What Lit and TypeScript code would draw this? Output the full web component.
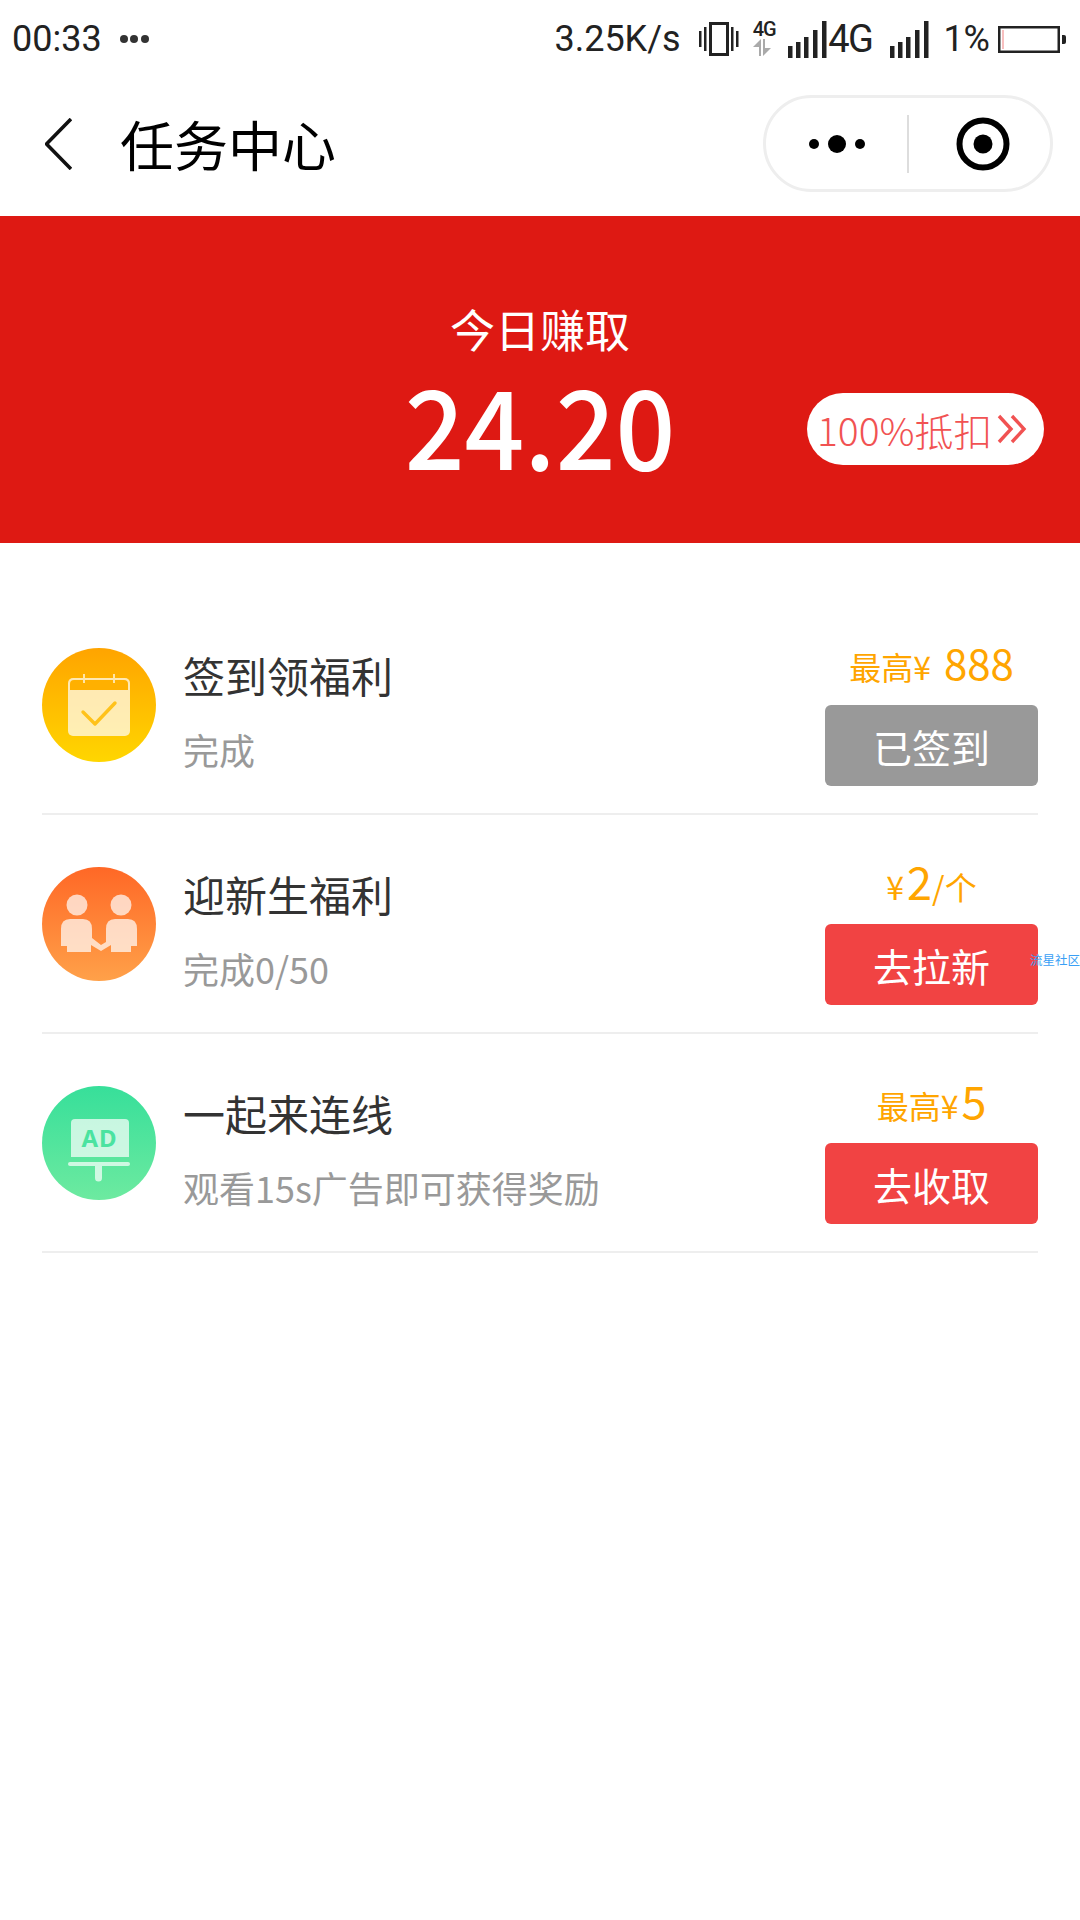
import { LitElement, html, css, svg } from "lit";
import { customElement } from "lit/decorators.js";

const signal = svg`<svg class="signal" width="39" height="37" viewBox="0 0 39 37" fill="#222">
  <rect x="0" y="25" width="4.5" height="12"/><rect x="8" y="21" width="4.5" height="16"/><rect x="16" y="16" width="4.5" height="21"/><rect x="25" y="9" width="4.5" height="28"/><rect x="34" y="0" width="4.5" height="37"/></svg>`;

const calendarIcon = svg`<svg class="icon" viewBox="0 0 114 114">
  <defs><linearGradient id="g1" x1="0" y1="0" x2="0" y2="1"><stop offset="0" stop-color="#ffa400"/><stop offset="1" stop-color="#ffd600"/></linearGradient></defs>
  <circle cx="57" cy="57" r="57" fill="url(#g1)"/>
  <path d="M31 30h52a5 5 0 0 1 5 5v48a5 5 0 0 1-5 5H31a5 5 0 0 1-5-5V35a5 5 0 0 1 5-5z" fill="#fff" fill-opacity=".7"/>
  <path d="M28 42V36a4 4 0 0 1 4-4h50a4 4 0 0 1 4 4v6z" fill="#ffb000"/>
  <path d="M42 26v9M72 26v9" stroke="#ffe5a8" stroke-width="2" fill="none"/>
  <path d="M41 64l12 12 20-21" stroke="#ffc21a" stroke-width="3.4" fill="none" stroke-linecap="round" stroke-linejoin="round"/></svg>`;

const peopleIcon = svg`<svg class="icon" viewBox="0 0 114 114">
  <defs><linearGradient id="g2" x1="0" y1="0" x2="0" y2="1"><stop offset="0" stop-color="#ff6826"/><stop offset="1" stop-color="#ffa149"/></linearGradient></defs>
  <circle cx="57" cy="57" r="57" fill="url(#g2)"/>
  <g fill="#fff" fill-opacity=".7">
    <circle cx="35" cy="38" r="10.5"/><circle cx="79" cy="38" r="10.5"/>
    <path d="M28 52h13q9 0 9 10v9l9 7 5-3v-13q0-10 9-10h13q9 0 9 10v17h-6v6H69V78l-10 6-10-6v7H25v-6h-6V62q0-10 9-10z"/>
  </g></svg>`;

const adIcon = svg`<svg class="icon" viewBox="0 0 114 114">
  <defs><linearGradient id="g3" x1="0" y1="0" x2="0" y2="1"><stop offset="0" stop-color="#37df9a"/><stop offset="1" stop-color="#6deaa0"/></linearGradient></defs>
  <circle cx="57" cy="57" r="57" fill="url(#g3)"/>
  <g fill="#fff" fill-opacity=".7">
    <path d="M33 33h50a4 4 0 0 1 4 4v34H29V37a4 4 0 0 1 4-4z"/>
    <rect x="26" y="76" width="62" height="4" rx="2"/>
    <path d="M53 80h7v12a3.500 3.500 0 0 1-7 0z"/>
  </g>
  <text x="57.500" y="61" text-anchor="middle" font-family="'Noto Sans','Noto Sans CJK SC',sans-serif" font-weight="700" font-size="24" letter-spacing="1" fill="#4be3a0">AD</text></svg>`;

interface Task { icon: unknown; title: string; sub: string; price: unknown; btn: string; done?: boolean; mark?: boolean }

const tasks: Task[] = [
  { icon: calendarIcon, title: "签到领福利", sub: "完成", btn: "已签到", done: true,
    price: html`<span class="s">最高¥</span><span class="n big">888</span>` },
  { icon: peopleIcon, title: "迎新生福利", sub: "完成0/50", btn: "去拉新", mark: true,
    price: html`<span class="s">¥</span><span class="n">2</span><span class="s">/个</span>` },
  { icon: adIcon, title: "一起来连线", sub: "观看15s广告即可获得奖励", btn: "去收取",
    price: html`<span class="s">最高¥</span><span class="n">5</span>` },
];

@customElement("app-root")
export class AppRoot extends LitElement {
  static styles = css`
    :host { display: block; min-height: 1920px; background: #fff; font-family: "Noto Sans CJK SC", "Noto Sans", sans-serif; }
    .status { height: 78px; display: flex; align-items: center; padding: 0 13px 0 12px; font-family: Roboto, sans-serif; font-size: 36px; color: #222; box-sizing: border-box; }
    .status span { line-height: 1.2; }
    .time, .speed, .lte, .pct { position: relative; top: 1px; }
    .dots { margin-left: 18px; display: flex; gap: 2.500px; }
    .dots i { width: 8px; height: 8px; border-radius: 50%; background: #333; display: block; }
    .right { margin-left: auto; display: flex; align-items: center; height: 78px; }
    .speed { margin-right: 18px; }
    .vib { margin-right: 14px; }
    .small4g { margin-right: 9px; width: 26px; height: 40px; display: flex; flex-direction: column; align-items: flex-start; }
    .status .small4g span { font-size: 20px; font-weight: 500; letter-spacing: -1px; line-height: 20px; white-space: nowrap; }
    .small4g svg { display: block; }
    .lte { font-size: 38px; letter-spacing: -1.500px; margin: 0 17.500px 0 1.500px; }
    .pct { margin: 0 8px 0 14.500px; }
    .nav { height: 138px; display: flex; align-items: center; padding: 0 27px 7px 45px; box-sizing: border-box; }
    .back { margin-right: 48px; }
    .nav h1 { margin: 0; font-size: 54px; font-weight: 400; color: #000; line-height: 1; flex: 1; }
    .capsule { width: 290px; height: 97px; box-sizing: border-box; border: 3px solid #eee; border-radius: 49px; display: flex; align-items: center; }
    .cap-l { width: 141px; display: flex; justify-content: center; align-items: center; gap: 9px; box-sizing: border-box; }
    .cap-l i { display: block; border-radius: 50%; background: #000; width: 10px; height: 10px; }
    .cap-l i.m { width: 18px; height: 18px; }
    .sep { width: 2px; height: 58px; background: #ddd; }
    .cap-r { flex: 1; display: flex; justify-content: center; padding-left: 6px; }
    .hero { height: 327px; background: #de1913; color: #fff; position: relative; display: flex; flex-direction: column; align-items: center; box-sizing: border-box; padding-top: 83px; }
    .hero .lbl { font-size: 45px; line-height: 60px; }
    .hero .val { font-size: 105px; line-height: 100px; font-weight: 500; margin-top: 13px; transform: scaleY(1.04); }
    .pill { position: absolute; left: 807px; top: 177px; width: 237px; height: 72px; border-radius: 36px; background: #fff; color: #f15252; display: flex; align-items: center; padding-left: 10px; box-sizing: border-box; font-size: 39px; font-weight: 300; }
    .pill svg { margin-left: 4px; }
    .list { margin-top: 53px; }
    .row { position: relative; margin: 0 42px; height: 219px; box-sizing: border-box; border-bottom: 2px solid #eee; display: flex; }
    .icon { width: 114px; height: 114px; margin-top: 52px; flex: none; display: block; }
    .txt { flex: 1; margin-left: 27px; margin-top: 49px; }
    .t { font-size: 42px; line-height: 60px; color: #333; }
    .d { font-size: 36px; line-height: 50px; margin-top: 19px; color: #999; }
    .act { width: 213px; display: flex; flex-direction: column; align-items: center; }
    .price { height: 60px; margin-top: 36px; margin-bottom: 13px; display: flex; align-items: baseline; justify-content: center; color: #ffa500; line-height: 60px; white-space: nowrap; }
    .s { font-size: 32px; }
    .n { font-size: 45px; margin-left: 3px; }
    .n.big { font-size: 42px; margin-left: 13px; }
    .btn { width: 213px; height: 81px; border-radius: 6px; background: #f14343; color: #fff; font-size: 39px; display: flex; align-items: center; justify-content: center; }
    .btn.done { background: #999; }
    .mark { position: absolute; right: -42px; top: 137px; width: 50px; font-size: 12.500px; line-height: 16px; color: #3a9ff5; white-space: nowrap; }
  `;

  render() {
    return html`
      <div class="status">
        <span class="time">00:33</span>
        <span class="dots"><i></i><i></i><i></i></span>
        <div class="right">
          <span class="speed">3.25K/s</span>
          <svg class="vib" width="40" height="34" viewBox="0 0 40 34" fill="#222">
            <rect x="0" y="9" width="2.500" height="16"/><rect x="5" y="5" width="2.500" height="24"/>
            <rect x="11.500" y="1.500" width="17" height="31" fill="none" stroke="#222" stroke-width="3"/>
            <rect x="32" y="5" width="2.500" height="24"/><rect x="37" y="9" width="2.500" height="16"/>
          </svg>
          <div class="small4g">
            <span>4G</span>
            <svg width="18" height="18" viewBox="0 0 18 18"><path d="M8 0v17H6V8H0zM10 0h2v9h6l-8 8z" fill="#aaa"/></svg>
          </div>
          ${signal}
          <span class="lte">4G</span>
          ${signal}
          <span class="pct">1%</span>
          <svg width="69" height="27" viewBox="0 0 69 27">
            <rect x="1.250" y="1.250" width="59.500" height="24.500" fill="none" stroke="#222" stroke-width="2.500"/>
            <rect x="4.500" y="4" width="1" height="19" fill="#f08080"/>
            <path d="M64 9h2a2 2 0 0 1 2 2v5a2 2 0 0 1-2 2h-2z" fill="#222"/>
          </svg>
        </div>
      </div>
      <div class="nav">
        <svg class="back" width="27" height="52" viewBox="0 0 27 52"><path d="M26 1L1.500 26 26 51" fill="none" stroke="#111" stroke-width="3.600"/></svg>
        <h1>任务中心</h1>
        <div class="capsule">
          <div class="cap-l"><i></i><i class="m"></i><i></i></div>
          <div class="sep"></div>
          <div class="cap-r">
            <svg width="54" height="54" viewBox="0 0 54 54"><circle cx="27" cy="27" r="23.500" fill="none" stroke="#000" stroke-width="6"/><circle cx="27" cy="27" r="9.500" fill="#000"/></svg>
          </div>
        </div>
      </div>
      <div class="hero">
        <div class="lbl">今日赚取</div>
        <div class="val">24.20</div>
        <div class="pill">100%抵扣
          <svg width="30" height="30" viewBox="0 0 30 30" fill="none" stroke="#f15252" stroke-width="3.400"><path d="M2 2l12 13L2 28M15 2l12 13-12 13"/></svg>
        </div>
      </div>
      <div class="list">
        ${tasks.map((t) => html`
          <div class="row">
            ${t.icon}
            <div class="txt"><div class="t">${t.title}</div><div class="d">${t.sub}</div></div>
            <div class="act">
              <div class="price">${t.price}</div>
              <div class="btn ${t.done ? "done" : ""}">${t.btn}</div>
            </div>
            ${t.mark ? html`<div class="mark">流星社区</div>` : ""}
          </div>`)}
      </div>
    `;
  }
}
